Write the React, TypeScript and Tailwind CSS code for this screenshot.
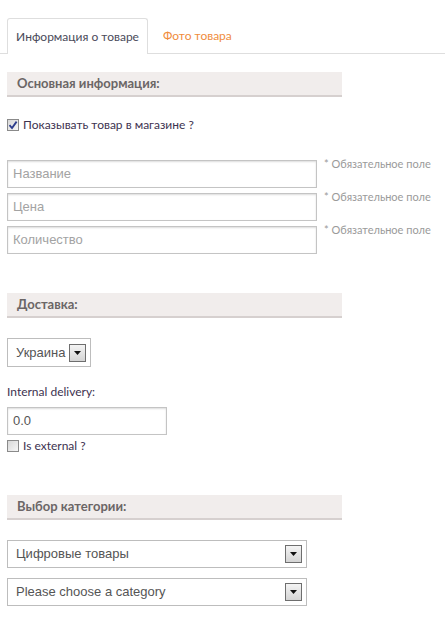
import React from "react";

const ui = { fontFamily: "Lato, 'Noto Sans', sans-serif" };
const arial = { fontFamily: "'Liberation Sans', Arial, sans-serif" };

function SectionHeader({ title }: { title: string }) {
  return (
    <div className="w-[335px] h-[25px] bg-[#f1edec] border-b-2 border-[#d6d0cf] flex items-center pl-[10px]">
      <span className="text-[13px] font-bold text-[#6b6666]" style={ui}>{title}</span>
    </div>
  );
}

function Checkbox({ checked }: { checked?: boolean }) {
  return (
    <span className="w-[12px] h-[12px] border border-[#8a8a8a] bg-gradient-to-br from-[#d8d8d8] to-[#f6f6f6] flex items-center justify-center shrink-0">
      {checked && (
        <svg width="10" height="10" viewBox="0 0 10 10">
          <path d="M1.5 5.2 L4 8 L8.6 1.6" fill="none" stroke="#2c3c8c" strokeWidth="1.8" />
        </svg>
      )}
    </span>
  );
}

function ArrowBtn() {
  return (
    <span className="w-[17px] h-[18px] border border-[#6e6e6e] bg-gradient-to-b from-[#f4f4f4] to-[#d4d4d4] flex items-center justify-center shrink-0">
      <svg width="7" height="4" viewBox="0 0 7 4">
        <path d="M0 0 H7 L3.5 4 Z" fill="#111" />
      </svg>
    </span>
  );
}

function TextField({ placeholder, value, width }: { placeholder?: string; value?: string; width: string }) {
  return (
    <div className={`${width} h-[28px] border border-[#c4c4c4] shadow-[inset_0_1px_2px_rgba(0,0,0,0.14)] flex items-center pl-[5px]`}>
      <span className={`text-[13px] ${value ? "text-[#555]" : "text-[#a3a3a3]"}`} style={arial}>
        {value ?? placeholder}
      </span>
    </div>
  );
}

export default function App() {
  return (
    <div className="w-[445px] h-[639px] bg-white relative overflow-hidden">
      {/* Tabs */}
      <div className="pt-[18px] flex items-end">
        <div className="w-[7px] border-b border-[#dedede] h-[1px]" />
        <div className="w-[141px] h-[36px] border border-b-0 border-[#dedede] rounded-t-[3px] flex items-center justify-center">
          <span className="text-[12px] text-[#4a4a5a]" style={ui}>Информация о товаре</span>
        </div>
        <div className="flex-1 h-[36px] border-b border-[#dedede] flex items-center pl-[15px]">
          <span className="text-[12px] text-[#f08c3c]" style={ui}>Фото товара</span>
        </div>
      </div>

      <div className="pl-[7px]">
        <div className="mt-[18px]">
          <SectionHeader title="Основная информация:" />
        </div>

        <div className="mt-[20px] h-[16px] flex items-center gap-[4px]">
          <Checkbox checked />
          <span className="text-[12px] leading-[16px] text-[#3d3250]" style={ui}>Показывать товар в магазине ?</span>
        </div>

        <div className="mt-[27px] flex flex-col gap-[5px]">
          {["Название", "Цена", "Количество"].map((p) => (
            <div key={p} className="flex items-start gap-[7px]">
              <TextField placeholder={p} width="w-[310px]" />
              <span className="text-[11px] text-[#9a9a9a] -mt-[4px]" style={ui}>* Обязательное поле</span>
            </div>
          ))}
        </div>

        <div className="mt-[39px]">
          <SectionHeader title="Доставка:" />
        </div>

        <div className="mt-[20px] w-[84px] h-[29px] border border-[#bdbdbd] flex items-center pl-[8px] pr-[4px] justify-between">
          <span className="text-[13px] text-[#555]" style={arial}>Украина</span>
          <ArrowBtn />
        </div>

        <div className="mt-[17px] h-[16px] text-[12px] leading-[16px] text-[#3d3250]" style={ui}>Internal delivery:</div>

        <div className="mt-[7px]">
          <TextField value="0.0" width="w-[160px]" />
        </div>

        <div className="mt-[4px] h-[14px] flex items-center gap-[4px]">
          <Checkbox />
          <span className="text-[12px] leading-[14px] text-[#3d3250]" style={ui}>Is external ?</span>
        </div>

        <div className="mt-[42px]">
          <SectionHeader title="Выбор категории:" />
        </div>

        <div className="mt-[20px] flex flex-col gap-[10px]">
          {["Цифровые товары", "Please choose a category"].map((t) => (
            <div key={t} className="w-[300px] h-[28px] border border-[#bdbdbd] flex items-center justify-between pl-[8px] pr-[4px]">
              <span className="text-[13px] text-[#555]" style={arial}>{t}</span>
              <ArrowBtn />
            </div>
          ))}
        </div>
      </div>
    </div>
  );
}
